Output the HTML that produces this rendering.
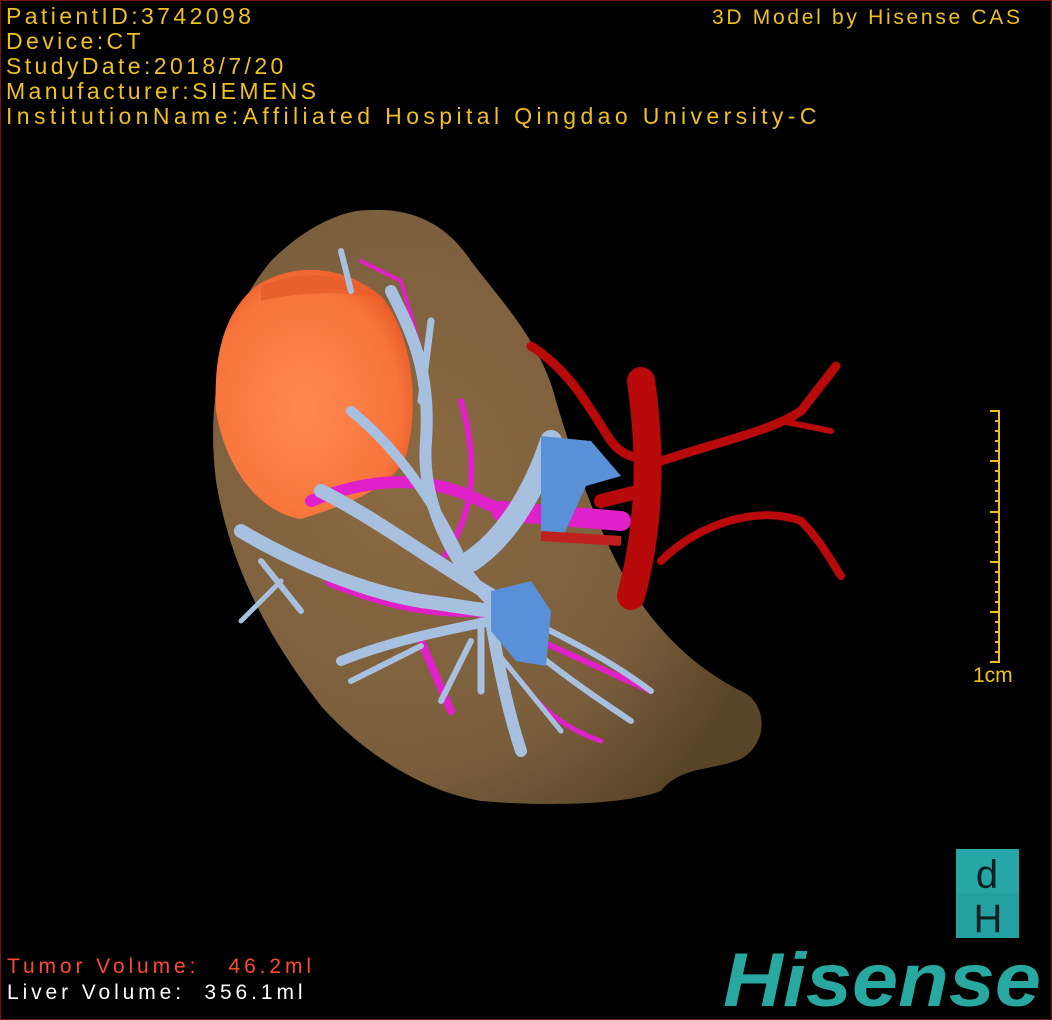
<!DOCTYPE html>
<html><head><meta charset="utf-8"><style>
html,body{margin:0;padding:0;background:#000}
#c{position:relative;width:1050px;height:1018px;border:1px solid #7a1414;background:#000;overflow:hidden;font-family:"Liberation Sans",sans-serif}
.t{position:absolute;color:#f0c020;font-size:23px;line-height:25px;white-space:pre;letter-spacing:3.4px}
.r{color:#ff4a30}
.w{color:#ffffff}
</style></head><body><div id="c">
<div class="t" style="left:5px;top:3px">PatientID:3742098<br>Device:CT<br>StudyDate:2018/7/20<br>Manufacturer:SIEMENS<br><span style="letter-spacing:4.4px">InstitutionName:Affiliated Hospital Qingdao University-C</span></div>
<div class="t" style="left:711px;top:4px;font-size:21px;letter-spacing:2.7px">3D Model by Hisense CAS</div>
<div class="t r" style="left:6px;top:953px;font-size:21px;letter-spacing:3.9px">Tumor Volume:   46.2ml</div>
<div class="t w" style="left:6px;top:979px;font-size:21px;letter-spacing:3.9px">Liver Volume:  356.1ml</div>
<svg width="1050" height="1018" style="position:absolute;left:0;top:0">
<defs>
<radialGradient id="lv" cx="0.35" cy="0.45" r="0.7"><stop offset="0" stop-color="#8a6a42"/><stop offset="0.7" stop-color="#7a5e3c"/><stop offset="1" stop-color="#5a4428"/></radialGradient>
<radialGradient id="tm" cx="0.45" cy="0.55" r="0.6"><stop offset="0" stop-color="#ff8a50"/><stop offset="0.8" stop-color="#f7743c"/><stop offset="1" stop-color="#e85a28"/></radialGradient>
</defs>
<path d="M355 210 C400 205 440 215 470 260 C500 300 540 340 555 400 C570 450 590 510 615 560 C640 610 680 660 740 690 C765 700 770 740 740 758 C710 770 680 765 660 790 C620 805 540 805 480 800 C420 790 360 750 320 705 C270 640 230 570 215 480 C205 400 220 320 270 260 C300 230 330 215 355 210Z" fill="url(#lv)"/>
<path d="M255 285 C290 262 340 262 380 295 C410 330 420 400 405 455 C390 490 340 505 300 518 C260 512 225 470 215 410 C212 350 225 310 255 285Z" fill="url(#tm)"/>
<path d="M260 285 C300 268 345 270 380 298 C350 290 300 290 260 300Z" fill="#e8602c"/>
<g fill="none" stroke-linecap="round" stroke="#e020c8">
<path d="M310 500 C360 480 420 470 480 500 C520 520 560 520 600 515" stroke-width="12"/>
<path d="M500 510 L620 520" stroke-width="20"/>
<path d="M420 640 L450 710" stroke-width="8"/>
<path d="M440 600 C500 620 560 650 650 690" stroke-width="6"/>
<path d="M440 560 C470 520 480 470 460 400" stroke-width="6"/>
<path d="M330 580 C380 600 420 610 470 610" stroke-width="12"/>
<path d="M520 680 C540 710 570 730 600 740" stroke-width="5"/>
<path d="M360 260 L400 280 L420 350" stroke-width="4"/>
</g>
<g fill="none" stroke-linecap="round" stroke="#a8c0e0">
<path d="M390 290 C410 330 430 370 425 440 C420 500 450 560 490 600" stroke-width="12"/>
<path d="M340 250 L350 290" stroke-width="6"/>
<path d="M430 320 L420 400" stroke-width="7"/>
<path d="M350 410 C400 450 440 510 470 580" stroke-width="10"/>
<path d="M320 490 C380 520 430 560 500 600" stroke-width="14"/>
<path d="M240 530 C290 560 360 590 420 600 C460 605 480 610 500 610" stroke-width="14"/>
<path d="M260 560 L300 610" stroke-width="6"/>
<path d="M280 580 L240 620" stroke-width="5"/>
<path d="M340 660 C390 640 440 630 490 620" stroke-width="10"/>
<path d="M350 680 L420 645" stroke-width="6"/>
<path d="M490 620 C500 680 510 720 520 750" stroke-width="12"/>
<path d="M470 640 L440 700" stroke-width="6"/>
<path d="M520 640 C570 680 600 700 630 720" stroke-width="6"/>
<path d="M530 620 C570 640 610 660 650 690" stroke-width="6"/>
<path d="M470 560 C500 540 530 500 550 440" stroke-width="22"/>
<path d="M480 620 L480 690" stroke-width="7"/>
<path d="M495 650 L560 730" stroke-width="5"/>
</g>
<path d="M540 435 L590 440 L620 475 L585 485 L560 540 L540 530Z" fill="#5a90d8"/>
<path d="M490 590 L530 580 L550 610 L545 665 L515 660 L490 630Z" fill="#5a90d8"/>
<g fill="none" stroke-linecap="round" stroke="#b80a0a">
<path d="M640 380 C650 450 650 520 630 595" stroke-width="28"/>
<path d="M530 345 C570 370 590 410 610 440 C625 460 640 455 650 460" stroke-width="9"/>
<path d="M660 460 C720 440 770 430 800 410 L835 365" stroke-width="9"/>
<path d="M780 420 L830 430" stroke-width="6"/>
<path d="M660 560 C700 520 760 505 800 520 C820 540 830 560 840 575" stroke-width="8"/>
<path d="M640 490 L600 500" stroke-width="14"/>
</g>
<path d="M540 535 L620 540" stroke="#c02020" stroke-width="10"/>
<g stroke="#f0c020" stroke-width="2" fill="none">
<path d="M998 409 V662"/>
<path d="M989 410H998M994 420H998M994 430H998M994 440H998M994 450H998M989 460H998M994 470H998M994 480H998M994 490H998M994 500H998M989 511H998M994 521H998M994 531H998M994 541H998M994 551H998M989 561H998M994 571H998M994 581H998M994 591H998M994 601H998M989 611H998M994 621H998M994 631H998M994 641H998M994 651H998M989 661H998"/>
</g>
<text x="972" y="681" fill="#f0c020" font-size="21" font-family="Liberation Sans,sans-serif">1cm</text>
<rect x="955" y="848" width="63" height="44" fill="#27a6a6"/>
<rect x="955" y="892" width="63" height="45" fill="#23a0a0"/>
<text x="986" y="887" fill="#102020" font-size="40" text-anchor="middle" font-family="Liberation Sans,sans-serif">d</text>
<text x="987" y="931" fill="#102020" font-size="40" text-anchor="middle" font-family="Liberation Sans,sans-serif">H</text>
<text x="1040" y="1005" fill="#28a8a0" font-size="76" font-weight="bold" font-style="italic" text-anchor="end" textLength="318" lengthAdjust="spacingAndGlyphs" font-family="Liberation Sans,sans-serif">Hisense</text>
</svg>
</div></body></html>
